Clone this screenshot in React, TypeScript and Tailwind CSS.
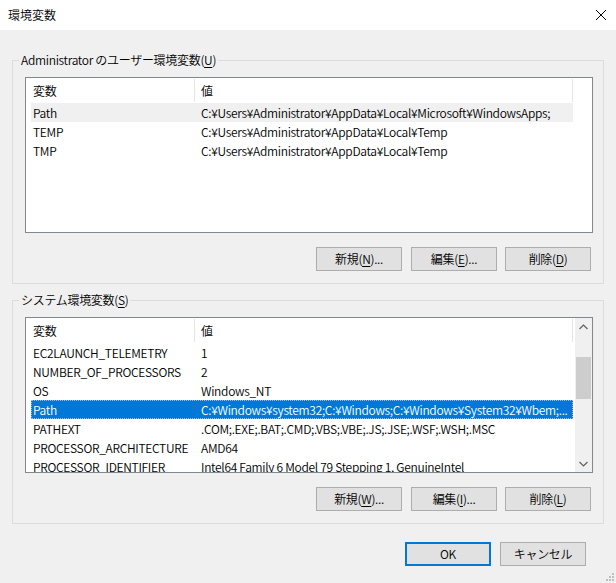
import React from "react";

type Row = { name: string; value: string };

const userRows: Row[] = [
  { name: "Path", value: "C:¥Users¥Administrator¥AppData¥Local¥Microsoft¥WindowsApps;" },
  { name: "TEMP", value: "C:¥Users¥Administrator¥AppData¥Local¥Temp" },
  { name: "TMP", value: "C:¥Users¥Administrator¥AppData¥Local¥Temp" },
];

const systemRows: Row[] = [
  { name: "EC2LAUNCH_TELEMETRY", value: "1" },
  { name: "NUMBER_OF_PROCESSORS", value: "2" },
  { name: "OS", value: "Windows_NT" },
  { name: "Path", value: "C:¥Windows¥system32;C:¥Windows;C:¥Windows¥System32¥Wbem;..." },
  { name: "PATHEXT", value: ".COM;.EXE;.BAT;.CMD;.VBS;.VBE;.JS;.JSE;.WSF;.WSH;.MSC" },
  { name: "PROCESSOR_ARCHITECTURE", value: "AMD64" },
  { name: "PROCESSOR_IDENTIFIER", value: "Intel64 Family 6 Model 79 Stepping 1, GenuineIntel" },
];

function Mn({ children }: { children: React.ReactNode }) {
  return <span className="underline underline-offset-2">{children}</span>;
}

function Button({ children, primary }: { children: React.ReactNode; primary?: boolean }) {
  return (
    <div
      className={
        "w-[86px] h-[24px] flex items-center justify-center bg-[#e1e1e1] text-[12px] leading-[16px] text-black " +
        (primary ? "border-2 border-[#0078d7]" : "border border-[#adadad]")
      }
    >
      {children}
    </div>
  );
}

function ListView({
  rows,
  hover,
  selected,
  scrollbar,
}: {
  rows: Row[];
  hover?: number;
  selected?: number;
  scrollbar?: boolean;
}) {
  return (
    <div className="h-[156px] w-[568px] border border-[#828790] bg-white flex overflow-hidden">
      <div className="flex-1 flex flex-col pl-[5px] overflow-hidden">
        {/* column header */}
        <div className="h-[25px] flex shrink-0">
          <div className="w-[164px] pl-[2px] flex items-center border-r border-[#e5e5e5] my-[1px]">変数</div>
          <div className="w-[378px] pl-[6px] flex items-center border-r border-[#e5e5e5] my-[1px]">値</div>
        </div>
        {rows.map((r, i) => {
          const isSel = i === selected;
          const isHover = i === hover;
          return (
            <div
              key={r.name}
              className={
                "h-[19px] w-[542px] flex shrink-0 whitespace-nowrap " +
                (isSel
                  ? "bg-[#0078d7] text-white outline outline-1 outline-dotted outline-[#9fb6e6] -outline-offset-1"
                  : isHover
                  ? "bg-[#f0f0f0]"
                  : "")
              }
            >
              <div className="w-[164px] pl-[2px] flex items-center overflow-hidden">{r.name}</div>
              <div className="w-[378px] pl-[6px] flex items-center overflow-hidden">{r.value}</div>
            </div>
          );
        })}
      </div>
      {scrollbar && (
        <div className="w-[17px] bg-[#f0f0f0] flex flex-col shrink-0">
          <div className="h-[17px] flex items-center justify-center">
            <svg width="9" height="6" viewBox="0 0 9 6">
              <path d="M0.5 5 L4.5 1 L8.5 5" fill="none" stroke="#606060" strokeWidth="1.2" />
            </svg>
          </div>
          <div className="h-[22px]" />
          <div className="h-[42px] mx-[1px] bg-[#cdcdcd]" />
          <div className="flex-1" />
          <div className="h-[17px] flex items-center justify-center">
            <svg width="9" height="6" viewBox="0 0 9 6">
              <path d="M0.5 1 L4.5 5 L8.5 1" fill="none" stroke="#606060" strokeWidth="1.2" />
            </svg>
          </div>
        </div>
      )}
    </div>
  );
}

function Group({
  label,
  children,
}: {
  label: React.ReactNode;
  children: React.ReactNode;
}) {
  return (
    <fieldset className="border border-[#dcdcdc] p-0 m-0 min-w-0">
      <legend className="ml-[6px] px-[2px] leading-[16px] text-[12px]">{label}</legend>
      <div className="pl-[12px] pr-[10px] pt-[9px] pb-[12px] flex flex-col">{children}</div>
    </fieldset>
  );
}

export default function App() {
  return (
    <div
      className="w-[616px] h-[583px] bg-[#f0f0f0] flex flex-col relative text-[12px] text-black overflow-hidden tracking-[-0.3px]"
      style={{ fontFamily: '"Noto Sans CJK JP", "Noto Sans", sans-serif', fontWeight: 350 }}
    >
      {/* title bar */}
      <div className="h-[30px] bg-white flex items-center justify-between pl-[8px] pr-[10px] shrink-0">
        <span className="leading-[16px] tracking-normal">環境変数</span>
        <svg width="10" height="10" viewBox="0 0 10 10">
          <path d="M0 0 L10 10 M10 0 L0 10" stroke="#000" strokeWidth="1" />
        </svg>
      </div>

      <div className="flex flex-col px-[12px] pt-[22px]">
        <Group
          label={
            <>
              Administrator のユーザー環境変数(<Mn>U</Mn>)
            </>
          }
        >
          <ListView rows={userRows} hover={0} />
          <div className="flex justify-end mt-[14px] mr-[2px] gap-[9px]">
            <Button>
              新規(<Mn>N</Mn>)...
            </Button>
            <Button>
              編集(<Mn>E</Mn>)...
            </Button>
            <div className="-ml-[1px]">
              <Button>
                削除(<Mn>D</Mn>)
              </Button>
            </div>
          </div>
        </Group>

        <div className="mt-[8px]">
          <Group
            label={
              <>
                システム環境変数(<Mn>S</Mn>)
              </>
            }
          >
            <ListView rows={systemRows} selected={3} scrollbar />
            <div className="flex justify-end mt-[14px] mr-[2px] gap-[9px]">
              <Button>
                新規(<Mn>W</Mn>)...
              </Button>
              <Button>
                編集(<Mn>I</Mn>)...
              </Button>
              <div className="-ml-[1px]">
                <Button>
                  削除(<Mn>L</Mn>)
                </Button>
              </div>
            </div>
          </Group>
        </div>

        <div className="flex justify-end gap-[9px] mt-[18px] mr-[18px]">
          <Button primary>OK</Button>
          <Button>キャンセル</Button>
        </div>
      </div>

      {/* size grip */}
      <svg className="absolute right-[2px] bottom-[2px]" width="10" height="10" viewBox="0 0 10 10">
        <rect x="8" y="2" width="2" height="2" fill="#bfbfbf" />
        <rect x="5" y="5" width="2" height="2" fill="#bfbfbf" />
        <rect x="8" y="5" width="2" height="2" fill="#bfbfbf" />
        <rect x="2" y="8" width="2" height="2" fill="#bfbfbf" />
        <rect x="5" y="8" width="2" height="2" fill="#bfbfbf" />
        <rect x="8" y="8" width="2" height="2" fill="#bfbfbf" />
      </svg>
    </div>
  );
}
